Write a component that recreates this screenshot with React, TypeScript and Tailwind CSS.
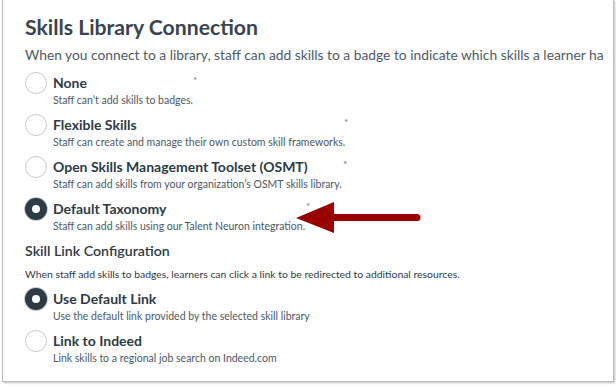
import React from "react";

type Opt = { label: string; desc: string; checked?: boolean; star?: number };

const libraryOptions: Opt[] = [
  { label: "None", desc: "Staff can\u2019t add skills to badges.", star: 168 },
  { label: "Flexible Skills", desc: "Staff can create and manage their own custom skill frameworks.", star: 319 },
  { label: "Open Skills Management Toolset (OSMT)", desc: "Staff can add skills from your organization\u2019s OSMT skills library.", star: 318 },
  { label: "Default Taxonomy", desc: "Staff can add skills using our Talent Neuron integration.", checked: true, star: 281 },
];

const linkOptions: Opt[] = [
  { label: "Use Default Link", desc: "Use the default link provided by the selected skill library", checked: true },
  { label: "Link to Indeed", desc: "Link skills to a regional job search on Indeed.com" },
];

function Radio({ checked }: { checked?: boolean }) {
  if (checked) {
    return (
      <div className="w-[22px] h-[22px] rounded-full bg-[#2d3b45] flex items-center justify-center shrink-0 shadow-[0_0_0_1px_#c7cdd1]">
        <div className="w-[8px] h-[8px] rounded-full bg-white" />
      </div>
    );
  }
  return <div className="w-[22px] h-[22px] rounded-full border border-[#c7cdd1] bg-white shrink-0" />;
}

function Option({ opt }: { opt: Opt }) {
  return (
    <div className="relative flex gap-[6px] h-[42px]">
      <div className="h-[20px] flex items-center">
        <Radio checked={opt.checked} />
      </div>
      <div className="flex flex-col">
        <div className="h-[20px] leading-[20px] text-[14px] font-bold text-[#2d3b45]">{opt.label}</div>
        <div className="h-[14px] leading-[14px] text-[10.5px] text-[#4d5966]">{opt.desc}</div>
      </div>
      {opt.star !== undefined && (
        <span className="absolute top-[0px] text-[10px] text-[#6f7880]" style={{ left: opt.star }}>*</span>
      )}
    </div>
  );
}

export default function App() {
  return (
    <div className="w-[616px] h-[386px] bg-white overflow-hidden font-['Lato','Liberation_Sans',sans-serif]">
      <div className="relative ml-[2px] w-[612px] h-[382px] border-x border-b border-[#b9bdc1] shadow-[1px_1px_2px_rgba(0,0,0,0.25)] pl-[22px] pt-[12px]">
        <h1 className="h-[30px] leading-[30px] text-[21.2px] font-bold text-[#394452]">Skills Library Connection</h1>
        <div className="mt-[3px] w-[578px] h-[20px] leading-[20px] overflow-hidden whitespace-nowrap text-[13.8px] text-[#4f5a66]">
          When you connect to a library, staff can add skills to a badge to indicate which skills a learner has
        </div>
        <div className="mt-[8px] flex flex-col">
          {libraryOptions.map((o) => (
            <Option key={o.label} opt={o} />
          ))}
        </div>
        <div className="h-[20px] leading-[20px] text-[14.2px] font-semibold text-[#2d3b45]">Skill Link Configuration</div>
        <div className="mt-[5px] h-[16px] leading-[16px] text-[10.4px] text-[#2d3b45]">
          When staff add skills to badges, learners can click a link to be redirected to additional resources.
        </div>
        <div className="mt-[7px] flex flex-col">
          {linkOptions.map((o) => (
            <Option key={o.label} opt={o} />
          ))}
        </div>

        <svg className="absolute left-[291px] top-[200px]" width="130" height="36" viewBox="0 0 130 36">
          <polygon points="2,18 40,2 40,33" fill="#990000" />
          <line x1="38" y1="17.5" x2="123" y2="17.5" stroke="#990000" strokeWidth="7" strokeLinecap="round" />
        </svg>
      </div>
    </div>
  );
}
